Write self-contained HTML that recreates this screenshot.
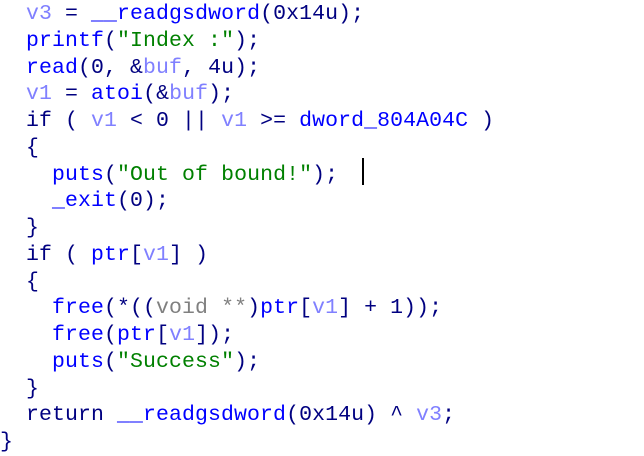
<!DOCTYPE html>
<html><head><style>
html,body{margin:0;padding:0;background:#fff;width:644px;height:437px;overflow:hidden}
pre{margin:0;position:absolute;left:0;top:1px;font-family:"Liberation Mono","DejaVu Sans Mono",monospace;font-size:21.5px;line-height:26.75px;color:#000080;letter-spacing:0.1px}
.f{color:#0000ff}.v{color:#8080ff}.s{color:#008000}.g{color:#808080}
#cur{position:absolute;left:362px;top:158px;width:2px;height:27px;background:#000}
</style></head><body>
<pre>  <span class="v">v3</span> = <span class="f">__readgsdword</span>(0x14u);
  <span class="f">printf</span>(<span class="s">"Index :"</span>);
  <span class="f">read</span>(0, &amp;<span class="v">buf</span>, 4u);
  <span class="v">v1</span> = <span class="f">atoi</span>(&amp;<span class="v">buf</span>);
  if ( <span class="v">v1</span> &lt; 0 || <span class="v">v1</span> &gt;= <span class="f">dword_804A04C</span> )
  {
    <span class="f">puts</span>(<span class="s">"Out of bound!"</span>);
    <span class="f">_exit</span>(0);
  }
  if ( <span class="f">ptr</span>[<span class="v">v1</span>] )
  {
    <span class="f">free</span>(*((<span class="g">void</span> <span class="g">**</span>)<span class="f">ptr</span>[<span class="v">v1</span>] + 1));
    <span class="f">free</span>(<span class="f">ptr</span>[<span class="v">v1</span>]);
    <span class="f">puts</span>(<span class="s">"Success"</span>);
  }
  return <span class="f">__readgsdword</span>(0x14u) ^ <span class="v">v3</span>;
}</pre>
<div id="cur"></div>
</body></html>
